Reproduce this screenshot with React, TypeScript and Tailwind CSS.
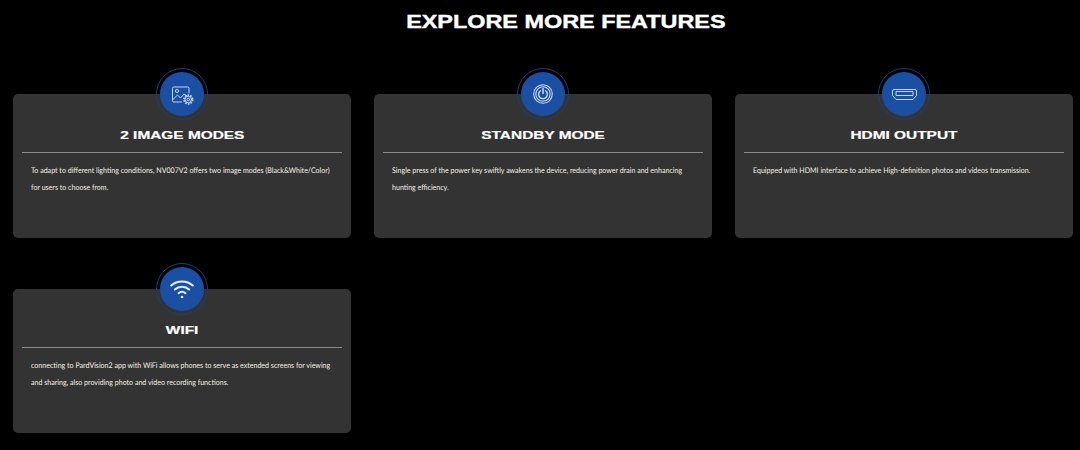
const body = { fontFamily: 'Lato, "Noto Sans", sans-serif' };
const head = { fontFamily: '"Liberation Sans", Arial, sans-serif' };

function ImageIcon() {
  return (
    <svg className="ml-[2px] mt-[4px]" width="22" height="20" viewBox="0 0 22 20" fill="none" stroke="#c4d4ee" strokeWidth="1" strokeLinecap="round" strokeLinejoin="round">
      <path d="M9.500 16H1.800A1.300 1.300 0 0 1 .5 14.700V2.300A1.300 1.300 0 0 1 1.800 1h13.900A1.300 1.300 0 0 1 17 2.300V7" />
      <circle cx="5" cy="5" r="1.600" />
      <path d="M1 13.500 5.500 9l3 3 3.500-4 2.500 1.500" />
      <circle cx="16.300" cy="13.500" r="4.300" strokeWidth="1.800" strokeDasharray="1.700 1" strokeLinecap="butt" />
      <circle cx="16.300" cy="13.500" r="3.200" />
      <circle cx="16.300" cy="13.500" r="1.300" />
    </svg>
  );
}

function PowerIcon() {
  return (
    <svg width="20" height="20" viewBox="0 0 20 20" fill="none" stroke="#c9d8f0" strokeWidth="1.100" strokeLinecap="round">
      <circle cx="10" cy="10" r="9.300" />
      <circle cx="10" cy="10" r="7.200" />
      <path strokeWidth="1.400" d="M7.400 6.800a4.400 4.400 0 1 0 5.200 0" />
      <path strokeWidth="1.500" d="M10 4.500v5" />
    </svg>
  );
}

function HdmiIcon() {
  return (
    <svg width="25" height="11" viewBox="0 0 25 11" fill="none" stroke="#c4d4ee" strokeWidth="1" strokeLinejoin="round">
      <path d="M2 .5h21a1.500 1.500 0 0 1 1.500 1.500v4.500l-3.500 4H4l-3.500-4V2A1.500 1.500 0 0 1 2 .5Z" />
      <rect x="4" y="2.500" width="17" height="4" />
    </svg>
  );
}

function WifiIcon() {
  return (
    <svg width="24" height="20" viewBox="0 0 24 20" fill="none" stroke="#e6eefa" strokeWidth="2" strokeLinecap="round">
      <path d="M1.200 6.500C7 1 17 1 22.800 6.500" />
      <path d="M4.800 10.500c4-3.700 10.400-3.700 14.400 0" />
      <path d="M8.500 14.200c2-1.700 5-1.700 7 0" />
      <circle cx="12" cy="18" r="1.300" fill="#e6eefa" stroke="none" />
    </svg>
  );
}

function Card({ title, icon, lines }: { title: string; icon: React.ReactNode; lines: string[] }) {
  return (
    <div className="relative h-[144px] rounded-[5px] bg-[#333333] px-[9px] pt-[34px]">
      <div className="absolute left-1/2 top-[-26px] flex h-[52px] w-[52px] -translate-x-1/2 items-center justify-center rounded-full border-[1.5px] border-[#1c3e78]">
        <div className="flex h-[44px] w-[44px] items-center justify-center rounded-full bg-[#1a4fa3]">{icon}</div>
      </div>
      <h3 style={head} className="text-center text-[11.5px] font-bold leading-[14px] text-white [-webkit-text-stroke:0.2px_white]">
        <span className="inline-block scale-x-[1.34]">{title}</span>
      </h3>
      <div className="mt-[10px] h-px bg-[#8a8a8a]" />
      <div style={body} className="mt-[9px] origin-left scale-x-[0.905] px-[10px] text-[7.8px] leading-[17px] text-[#f5f2e8] [text-rendering:geometricPrecision]">
        {lines.map((l) => (
          <p key={l} className="whitespace-nowrap">{l}</p>
        ))}
      </div>
    </div>
  );
}

export default function App() {
  return (
    <div className="h-[450px] w-[1080px] overflow-hidden bg-black">
      <h2 style={head} className="pl-[52px] pt-[12px] text-center text-[18px] font-bold leading-[20px] text-white [-webkit-text-stroke:0.4px_white]">
        <span className="inline-block scale-x-[1.3]">EXPLORE MORE FEATURES</span>
      </h2>
      <div className="mt-[62px] grid grid-cols-3 gap-x-[23px] gap-y-[51px] pl-[13px] pr-[7px]">
        <Card
          title="2 IMAGE MODES"
          icon={<ImageIcon />}
          lines={[
            "To adapt to different lighting conditions, NV007V2 offers two image modes (Black&White/Color)",
            "for users to choose from.",
          ]}
        />
        <Card
          title="STANDBY MODE"
          icon={<PowerIcon />}
          lines={[
            "Single press of the power key swiftly awakens the device, reducing power drain and enhancing",
            "hunting efficiency.",
          ]}
        />
        <Card
          title="HDMI OUTPUT"
          icon={<HdmiIcon />}
          lines={["Equipped with HDMI interface to achieve High-definition photos and videos transmission."]}
        />
        <Card
          title="WIFI"
          icon={<WifiIcon />}
          lines={[
            "connecting to PardVision2 app with WiFi allows phones to serve as extended screens for viewing",
            "and sharing, also providing photo and video recording functions.",
          ]}
        />
      </div>
    </div>
  );
}
